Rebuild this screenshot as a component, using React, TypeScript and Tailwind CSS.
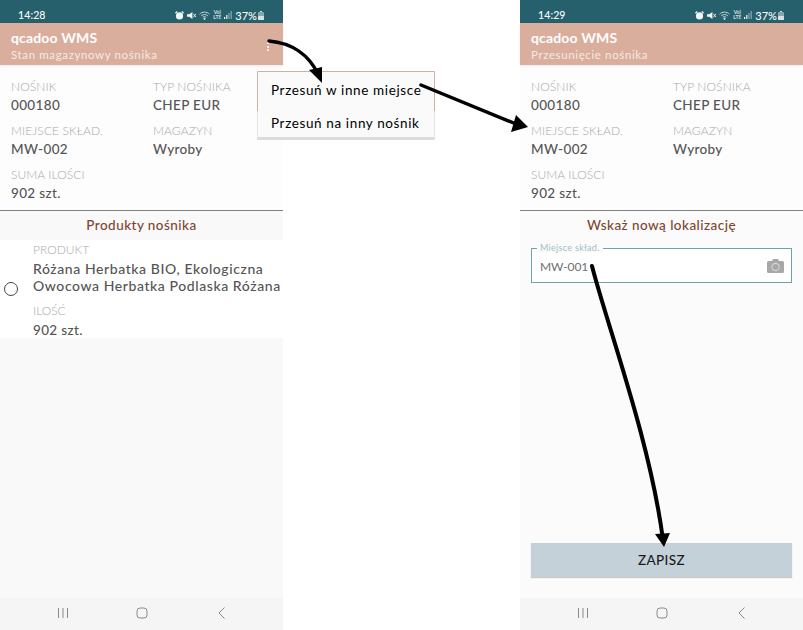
const font = "font-['Lato','Noto_Sans',sans-serif]";

function StatusBar({ time }: { time: string }) {
    return (
        <div className="h-[23px] bg-[#25606c] flex items-center justify-between pl-[18px] pr-[19px] pt-[7px] text-white shrink-0">
            <span className="text-[10.5px] leading-none tracking-[0.1px] font-medium">{time}</span>
            <div className="flex items-center gap-[3px]">
                {/* alarm */}
                <svg width="9" height="9" viewBox="0 0 10 10" fill="#f0f4f5">
                    <circle cx="5" cy="5.5" r="4" />
                    <path d="M0 2 L2 0 L3 1 L1 3 Z M10 2 L8 0 L7 1 L9 3 Z" />
                </svg>
                {/* mute */}
                <svg width="9" height="9" viewBox="0 0 10 10" fill="#f0f4f5">
                    <path d="M0 3.5h2.5L6 1v8L2.5 6.5H0z" />
                    <path d="M7 3l3 4M10 3L7 7" stroke="#f0f4f5" strokeWidth="1" />
                </svg>
                {/* wifi */}
                <svg width="11" height="9" viewBox="0 0 12 10" fill="none" stroke="#d5e2e4" strokeWidth="1">
                    <path d="M0.5 3.5C3.5 0.5 8.5 0.5 11.5 3.5M2.3 5.3C4.3 3.5 7.7 3.5 9.7 5.3M4 7c1.2-1 2.8-1 4 0" />
                    <circle cx="6" cy="8.7" r="0.8" fill="#d5e2e4" />
                </svg>
                <div className="flex flex-col items-center text-[5px] leading-[5px] font-bold text-[#d5e2e4]">
                    <span>Vo)</span>
                    <span>LTE</span>
                </div>
                {/* signal */}
                <svg width="8" height="8" viewBox="0 0 8 8" fill="#f0f4f5">
                    <rect x="0" y="6" width="1.2" height="2" />
                    <rect x="2.2" y="4" width="1.2" height="4" />
                    <rect x="4.4" y="2" width="1.2" height="6" fillOpacity="0.5" />
                    <rect x="6.6" y="0" width="1.2" height="8" fillOpacity="0.5" />
                </svg>
                <span className="text-[11px] leading-none font-medium">37%</span>
                {/* battery */}
                <svg width="6" height="9" viewBox="0 0 6 9" fill="#d5e2e4" className="-ml-[2px]">
                    <rect x="2" y="0" width="2" height="1" />
                    <rect x="0" y="1" width="6" height="8" rx="0.8" fillOpacity="0.55" />
                    <rect x="0" y="5" width="6" height="4" rx="0.8" />
                </svg>
            </div>
        </div>
    );
}

function Header({ subtitle }: { subtitle: string }) {
    return (
        <div className="h-[42px] bg-[#d9ae9d] pl-[11px] pt-[7px] shrink-0 shadow-[0_1px_2px_rgba(0,0,0,0.08)] relative">
            <div className="text-[14px] leading-[16px] font-bold text-white tracking-[0.15px]">qcadoo WMS</div>
            <div className="text-[11.5px] leading-[14px] mt-[2px] text-[#f6e9e3] tracking-[0.62px]">{subtitle}</div>
        </div>
    );
}

function Field({ label, value }: { label: string; value: string }) {
    return (
        <div className="h-[44px]">
            <div className="text-[12px] leading-[16px] font-light text-[#a8a8a8] tracking-[0.1px]">{label}</div>
            <div className="text-[13.5px] leading-[16px] mt-[2px] font-medium text-[#555555] tracking-[0.35px]">{value}</div>
        </div>
    );
}

function CarrierInfo() {
    return (
        <div className="h-[146px] pl-[11px] pt-[14px] bg-[#fdfdfd] border-b border-[#808080] grid grid-cols-[142px_1fr] content-start shrink-0">
            <Field label="NOŚNIK" value="000180" />
            <Field label="TYP NOŚNIKA" value="CHEP EUR" />
            <Field label="MIEJSCE SKŁAD." value="MW-002" />
            <Field label="MAGAZYN" value="Wyroby" />
            <Field label="SUMA ILOŚCI" value="902 szt." />
        </div>
    );
}

function SectionTitle({ children }: { children: string }) {
    return (
        <div className="h-[29px] flex items-center justify-center text-[13.5px] font-medium text-[#80452f] tracking-[0.45px] shrink-0">
            {children}
        </div>
    );
}

function NavBar() {
    return (
        <div className="h-[32px] bg-[#f5f5f5] flex items-center justify-center shrink-0 mt-auto">
            <svg width="283" height="32" viewBox="0 0 283 32" fill="none" stroke="#8a8a8a" strokeWidth="1">
                <path d="M58.5 10v10M63 10v10M67.5 10v10" />
                <rect x="137" y="10" width="10" height="10" rx="3" />
                <path d="M224.5 9.5L219 15l5.5 5.5" />
            </svg>
        </div>
    );
}

function Overlay() {
    return (
        <svg width="803" height="630" viewBox="0 0 803 630" className="absolute left-0 top-0 pointer-events-none">
            <path d="M269 41C292 43 309 55 318 74" fill="none" stroke="black" strokeWidth="3.5" strokeLinecap="round" />
            <path d="M309 70L322 67L322 83Z" fill="black" />
            <path d="M421 85L516 124" fill="none" stroke="black" strokeWidth="3.5" strokeLinecap="round" />
            <path d="M516 115L528 127L511 132Z" fill="black" />
            <path d="M592 266C607 325 650 440 663 540" fill="none" stroke="black" strokeWidth="4" strokeLinecap="round" />
            <path d="M655 534L670 533L664 547Z" fill="black" />
        </svg>
    );
}

export default function App() {
    return (
        <div className={`relative w-[803px] h-[630px] bg-white overflow-hidden flex ${font}`}>
            {/* left phone */}
            <div className="w-[283px] h-[630px] flex flex-col bg-[#f9f9f9]">
                <StatusBar time="14:28" />
                <Header subtitle="Stan magazynowy nośnika" />
                <CarrierInfo />
                <SectionTitle>Produkty nośnika</SectionTitle>
                <div className="h-[98px] bg-white flex items-start pt-[2px] shrink-0">
                    <div className="w-[33px] pl-[4px] pt-[40px] shrink-0">
                        <div className="w-[14px] h-[14px] rounded-full border-[1.5px] border-[#444444]"></div>
                    </div>
                    <div>
                        <div className="text-[12px] leading-[16px] font-light text-[#a8a8a8]">PRODUKT</div>
                        <div className="text-[14px] leading-[17px] mt-[2px] font-medium text-[#555555] tracking-[0.58px] whitespace-nowrap">
                            Różana Herbatka BIO, Ekologiczna
                            <br />
                            Owocowa Herbatka Podlaska Różana
                        </div>
                        <div className="text-[12px] leading-[16px] mt-[9px] font-light text-[#a8a8a8]">ILOŚĆ</div>
                        <div className="text-[13.5px] leading-[16px] mt-[3px] font-medium text-[#555555] tracking-[0.35px]">902 szt.</div>
                    </div>
                </div>
                <NavBar />
            </div>

            <div className="w-[237px]" />

            {/* right phone */}
            <div className="w-[283px] h-[630px] flex flex-col bg-[#fbfbfb]">
                <StatusBar time="14:29" />
                <Header subtitle="Przesunięcie nośnika" />
                <CarrierInfo />
                <SectionTitle>Wskaż nową lokalizację</SectionTitle>
                <div className="relative mx-[11px] mt-[8px] h-[35px] border-[1.5px] border-[#6fa3a8] bg-white flex items-center justify-between pl-[8px] pr-[7px] shrink-0">
                    <span className="absolute -top-[6px] left-[5px] px-[3px] bg-[#fbfbfb] text-[9px] leading-[10px] font-normal text-[#9cc0c4] tracking-[0.3px]">
                        Miejsce skład.
                    </span>
                    <span className="text-[12px] text-[#707070] tracking-[-0.1px] mt-[2px]">MW-001</span>
                    {/* solid camera */}
                    <svg width="17" height="14" viewBox="0 0 17 14" className="mt-[1px]">
                        <path d="M1.5 2H5L6 0h5l1 2h3.5A1.5 1.5 0 0 1 17 3.5v9a1.5 1.5 0 0 1-1.5 1.5h-14A1.5 1.5 0 0 1 0 12.5v-9A1.5 1.5 0 0 1 1.5 2z" fill="#a8a8a8" />
                        <circle cx="8.5" cy="8" r="3.6" fill="none" stroke="#d4d4d4" strokeWidth="1.1" />
                    </svg>
                </div>
                <button className="mx-[11px] mt-[260px] h-[34px] pt-[1px] bg-[#c5d1d9] shadow-[0_1px_1px_rgba(0,0,0,0.2)] text-[13.5px] font-medium text-[#1c1c1c] tracking-[0.4px] shrink-0">
                    ZAPISZ
                </button>
                <NavBar />
            </div>

            {/* dropdown menu, over the left phone */}
            <div className="absolute left-[257px] top-[71px] w-[178px] h-[69px] bg-[#fafafa] border-t border-[#cdb1a6] border-x border-x-[#e4e4e4] border-b-[3px] border-b-[#dcdcdc] pl-[13px] pt-[9px] text-[13.5px] font-normal text-[#000000] tracking-[0.62px]">
                <div className="absolute -left-px top-0 w-px h-[39px] bg-[#cdb1a6]"></div>
                <div className="absolute -right-px top-0 w-px h-[39px] bg-[#cdb1a6]"></div>
                <div className="leading-[18px]">Przesuń w inne miejsce</div>
                <div className="leading-[18px] mt-[15px]">Przesuń na inny nośnik</div>
            </div>

            {/* three dots in the toolbar */}
            <div className="absolute left-[267px] top-[42px] flex flex-col gap-[1.5px]">
                <div className="w-[2px] h-[2px] bg-white rounded-full"></div>
                <div className="w-[2px] h-[2px] bg-white rounded-full"></div>
                <div className="w-[2px] h-[2px] bg-white rounded-full"></div>
            </div>

            <Overlay />
        </div>
    );
}
